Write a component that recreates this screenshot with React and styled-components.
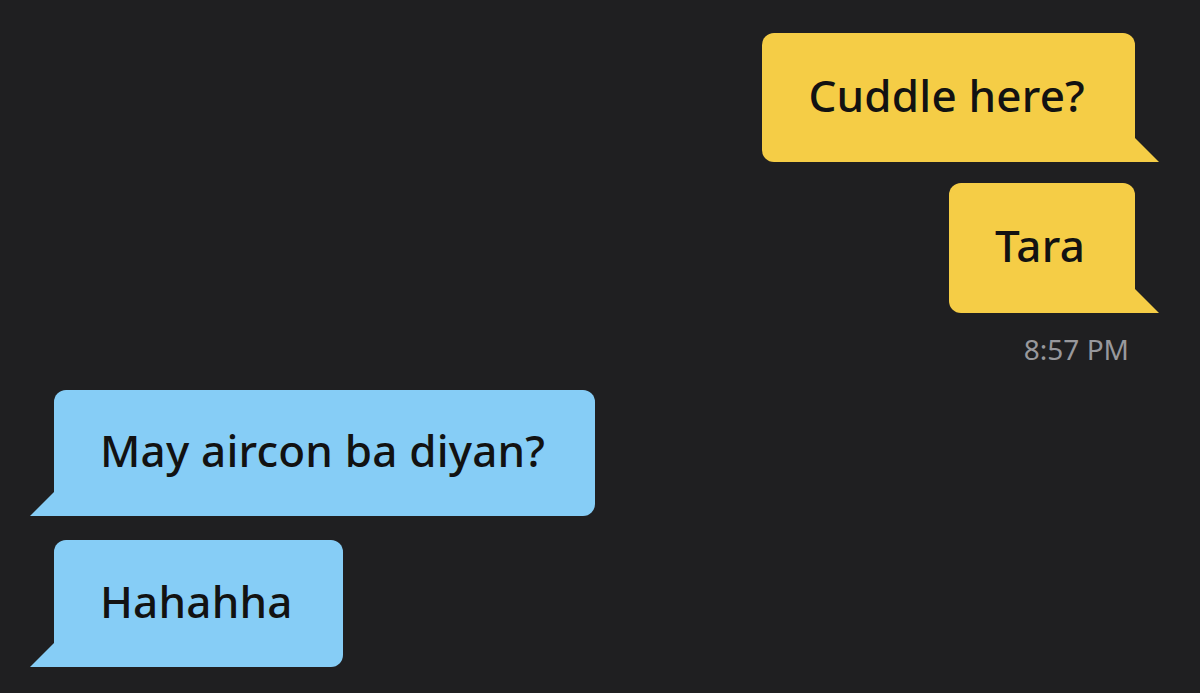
import styled, { createGlobalStyle, css } from "styled-components";

const GlobalStyle = createGlobalStyle`
  html, body {
    margin: 0;
    padding: 0;
    background: #1f1f21;
  }
  body {
    font-family: "Noto Sans", "Open Sans", sans-serif;
    -webkit-font-smoothing: antialiased;
  }
`;

const messages = [
  { id: 1, mine: true, text: "Cuddle here?", top: 0, h: 129 },
  { id: 2, mine: true, text: "Tara", top: 21, h: 130 },
  { id: 3, stamp: "8:57 PM" },
  { id: 4, mine: false, text: "May aircon ba diyan?", top: 0, h: 126 },
  { id: 5, mine: false, text: "Hahahha", top: 24, h: 127 },
];

const Thread = styled.div`
  display: flex;
  flex-direction: column;
  width: 1200px;
  height: 693px;
  box-sizing: border-box;
  padding: 33px 65px 0 54px;
  background: #1f1f21;
  overflow: hidden;
`;

const Bubble = styled.div`
  position: relative;
  display: flex;
  align-items: center;
  height: ${(p) => p.$h}px;
  margin-top: ${(p) => p.$top}px;
  padding: 0 50px 6px 46px;
  box-sizing: border-box;
  border-radius: 12px;
  font-size: 44px;
  line-height: 50px;
  font-weight: 500;
  color: #121212;
  letter-spacing: 0.2px;
  white-space: nowrap;

  &::after {
    content: "";
    position: absolute;
    bottom: 0;
    width: 25px;
    height: 25px;
    background: inherit;
  }

  ${(p) =>
    p.$mine
      ? css`
          align-self: flex-end;
          background: #f5cd46;
          border-bottom-right-radius: 0;
          &::after {
            right: -24px;
            clip-path: polygon(0 0, 100% 100%, 0 100%);
          }
        `
      : css`
          align-self: flex-start;
          background: #86cdf6;
          border-bottom-left-radius: 0;
          &::after {
            left: -24px;
            clip-path: polygon(100% 0, 100% 100%, 0 100%);
          }
        `}
`;

const Stamp = styled.div`
  align-self: flex-end;
  margin: 22px 6px 27px 0;
  font-size: 28px;
  line-height: 28px;
  color: #98989c;
`;

export default function App() {
  return (
    <>
      <GlobalStyle />
      <Thread>
        {messages.map((m) =>
          m.stamp ? (
            <Stamp key={m.id}>{m.stamp}</Stamp>
          ) : (
            <Bubble key={m.id} $mine={m.mine} $top={m.top} $h={m.h}>
              {m.text}
            </Bubble>
          )
        )}
      </Thread>
    </>
  );
}
